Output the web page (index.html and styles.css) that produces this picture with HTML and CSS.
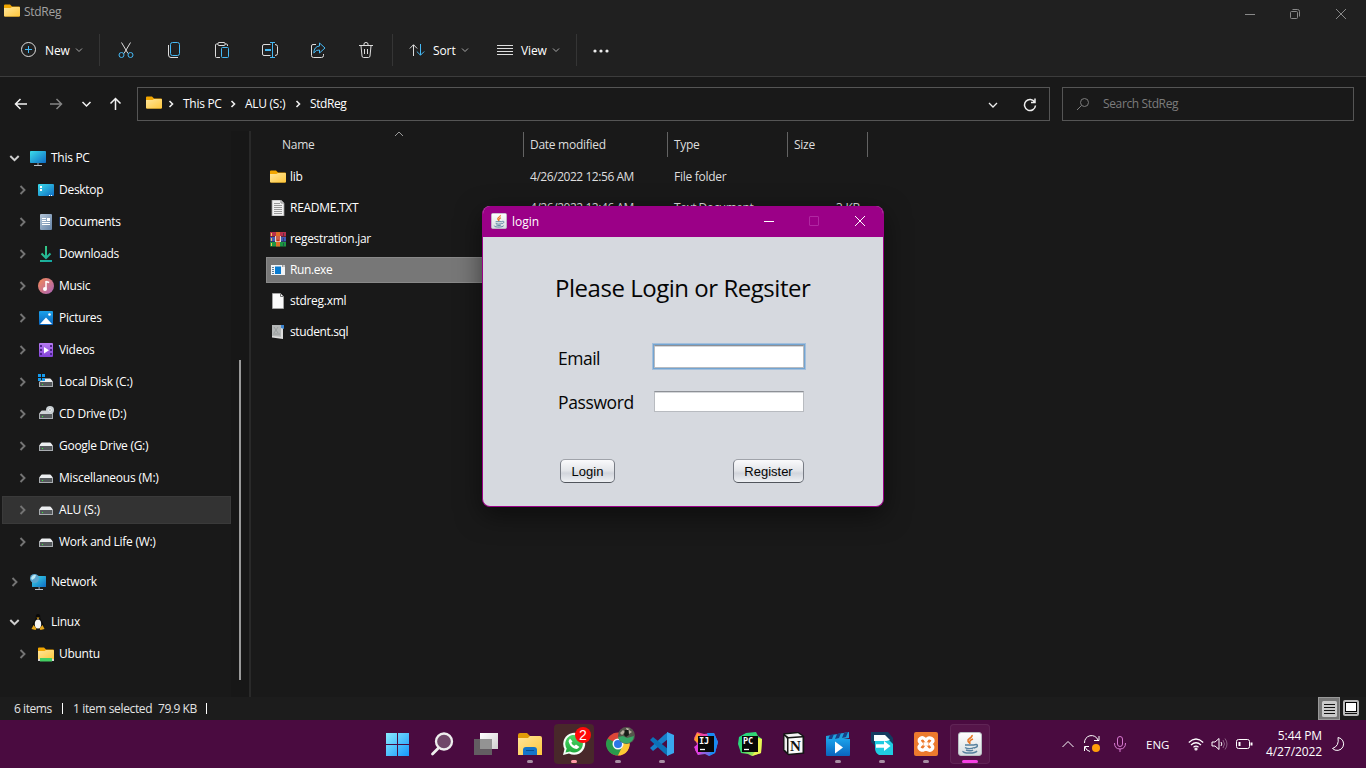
FILE: index.html
```html
<!DOCTYPE html>
<html lang="en">
<head>
<meta charset="utf-8">
<title>StdReg</title>
<link rel="stylesheet" href="styles.css">
</head>
<body>
<svg class="defs" aria-hidden="true">
  <defs>
    <linearGradient id="gFolder" x1="0" y1="0" x2="1" y2="1"><stop offset="0" stop-color="#ffe69b"/><stop offset="1" stop-color="#ffc73c"/></linearGradient>
    <linearGradient id="gBlue" x1="0" y1="0" x2="1" y2="1"><stop offset="0" stop-color="#3bdcea"/><stop offset="1" stop-color="#0f6cc4"/></linearGradient>
    <linearGradient id="gDoc" x1="0" y1="0" x2="1" y2="1"><stop offset="0" stop-color="#b4c6d8"/><stop offset="1" stop-color="#6482a6"/></linearGradient>
    <linearGradient id="gMusic" x1="0" y1="0" x2="1" y2="1"><stop offset="0" stop-color="#f58a55"/><stop offset="1" stop-color="#a862b8"/></linearGradient>
    <linearGradient id="gPic" x1="0" y1="0" x2="0" y2="1"><stop offset="0" stop-color="#1ba1ea"/><stop offset="1" stop-color="#0a64bd"/></linearGradient>
    <linearGradient id="gVid" x1="0" y1="0" x2="0" y2="1"><stop offset="0" stop-color="#b77bf2"/><stop offset="1" stop-color="#8242d8"/></linearGradient>
    <linearGradient id="gDown" gradientUnits="userSpaceOnUse" x1="2" y1="0" x2="14" y2="16"><stop offset="0" stop-color="#3ccf7c"/><stop offset="1" stop-color="#12a5a5"/></linearGradient>
    <linearGradient id="gWin" x1="0" y1="0" x2="1" y2="1"><stop offset="0" stop-color="#8aebff"/><stop offset="1" stop-color="#1597fb"/></linearGradient>
    <linearGradient id="gTask" x1="0" y1="0" x2="1" y2="1"><stop offset="0" stop-color="#ffffff"/><stop offset="1" stop-color="#cfcfcf"/></linearGradient>
    <linearGradient id="gWa" x1="0" y1="0" x2="0" y2="1"><stop offset="0" stop-color="#4ed868"/><stop offset="1" stop-color="#1faa3b"/></linearGradient>
    <linearGradient id="gIj" x1="0" y1="0" x2="1" y2="1"><stop offset="0" stop-color="#ff3c6e"/><stop offset=".45" stop-color="#d64ad0"/><stop offset="1" stop-color="#148cff"/></linearGradient>
    <linearGradient id="gPyc" x1="0" y1="0" x2="1" y2="1"><stop offset="0" stop-color="#1ed98b"/><stop offset=".5" stop-color="#37d66c"/><stop offset="1" stop-color="#f5ef48"/></linearGradient>
    <linearGradient id="gJava" x1="0" y1="0" x2="0" y2="1"><stop offset="0" stop-color="#ffffff"/><stop offset="1" stop-color="#d5dde0"/></linearGradient>
    <symbol id="folder" viewBox="0 0 16 16"><path d="M0 2.500Q0 1.500 1 1.500h5l2 2h7q1 0 1 1v8q0 1-1 1H1q-1 0-1-1z" fill="#f2a600"/><path d="M0 5h6.500l1.500-1h7q1 0 1 1v7.500q0 1-1 1H1q-1 0-1-1z" fill="url(#gFolder)"/></symbol>
    <symbol id="chev-r" viewBox="0 0 16 16"><path d="M6.500 4 10.500 8l-4 4" fill="none" stroke="currentColor" stroke-width="1.900"/></symbol>
    <symbol id="chev-d" viewBox="0 0 16 16"><path d="M4.300 6 8.500 10.200 12.700 6" fill="none" stroke="currentColor" stroke-width="2"/></symbol>
    <symbol id="pc" viewBox="0 0 16 16"><rect y="1" width="16" height="12" rx=".8" fill="url(#gBlue)"/><path d="M7.300 13h1.400v2H7.300z" fill="#77828c"/><path d="M4 15h8v1H4z" fill="#b9c1c9"/></symbol>
    <symbol id="desktop" viewBox="0 0 16 16"><rect y="2" width="16" height="12" rx="1" fill="url(#gBlue)"/><path d="M2 4h2v2H2zM2 7h2v2H2z" fill="#fff"/><path d="M11 13h1v1h-1zM13 13h1v1h-1z" fill="#fff"/></symbol>
    <symbol id="documents" viewBox="0 0 16 16"><rect x="2" width="12" height="16" rx="1" fill="url(#gDoc)"/><path d="M4 4.500h4M4 6.500h4M4 8.500h8M4 10.500h8" stroke="#fff"/><path d="M9 4h3v3H9z" fill="#fff"/></symbol>
    <symbol id="downloads" viewBox="0 0 16 16"><path d="M8 0v11M3.500 7.500 8 12l4.500-4.500M2 15h12" fill="none" stroke="url(#gDown)" stroke-width="2"/></symbol>
    <symbol id="music" viewBox="0 0 16 16"><circle cx="8" cy="8" r="8" fill="url(#gMusic)"/><path d="M8 3v7.500M8 3.500l3.200 1" stroke="#fff" stroke-width="1.500"/><circle cx="7" cy="11" r="2" fill="#fff"/></symbol>
    <symbol id="pictures" viewBox="0 0 16 16"><rect x="1" y="1" width="14" height="14" rx="1" fill="url(#gPic)"/><path d="M2 14 8 7.500l6 6.500z" fill="#fff"/><circle cx="11.500" cy="4.500" r="1.300" fill="#fff"/></symbol>
    <symbol id="videos" viewBox="0 0 16 16"><rect x="1" y="1" width="14" height="14" rx="1" fill="url(#gVid)"/><path d="M2 3h2v2H2zM2 7h2v2H2zM2 11h2v2H2zM12 3h2v2h-2zM12 7h2v2h-2zM12 11h2v2h-2z" fill="#4d248a"/><path d="M6 5v6.500l5-3.250z" fill="#fff"/></symbol>
    <symbol id="drive" viewBox="0 0 16 16"><path d="M4 4.500h8q1 0 3 3.500H1q2-3.500 3-3.500z" fill="#eceef0"/><path d="M1 8h14v4H1z" fill="#55595c"/><path d="M1 12h14v1H1zM1 8h1v4H1zM14 8h1v4h-1z" fill="#a8acb0"/><path d="M4 10h1v1H4z" fill="#37ee37"/></symbol>
    <symbol id="disk-c" viewBox="0 0 16 16"><path d="M7 4.500h5q1 0 3 3.500H1z" fill="#eceef0"/><path d="M1 8h14v4H1z" fill="#55595c"/><path d="M1 12h14v1H1zM1 8h1v4H1zM14 8h1v4h-1z" fill="#a8acb0"/><path d="M4 10h1v1H4z" fill="#37ee37"/><path d="M0 0h3v3H0zM4 0h3v3H4zM0 4h3v3H0zM4 4h3v3H4z" fill="#159bed"/></symbol>
    <symbol id="cd" viewBox="0 0 16 16"><path d="M4 4.500h8q1 0 3 3.500H1q2-3.500 3-3.500z" fill="#d0d3d6"/><path d="M1 8h14v4H1z" fill="#55595c"/><path d="M1 12h14v1H1zM1 8h1v4H1zM14 8h1v4h-1z" fill="#a8acb0"/><path d="M4 10h1v1H4z" fill="#37ee37"/><circle cx="12" cy="4" r="4" fill="#c9d0d4"/><circle cx="12" cy="4" r="1.300" fill="#69737a" stroke="#fff"/></symbol>
    <symbol id="network" viewBox="0 0 16 16"><rect x="2" y="2" width="14" height="11" rx=".5" fill="url(#gBlue)"/><path d="M8.500 13h1.300v2H8.500z" fill="#77828c"/><path d="M5 15h8v1H5z" fill="#b9c1c9"/><circle cx="4.500" cy="4.500" r="4.500" fill="#5aa5cf"/><path d="M1 4Q3 0 6 1L5 4 2 6z" fill="#bce9f5"/></symbol>
    <symbol id="tux" viewBox="0 0 16 16"><path d="M6 1q2-2 4 0l.5 4 3 5v4H2.500v-4l3-5z" fill="#090909"/><ellipse cx="8" cy="10" rx="3.200" ry="4.500" fill="#f4f4f4"/><path d="M6.500 3.500h3L8 5.500zM3.500 11l3 3.500-1 1.500-4-1zM12.500 11l-3 3.500 1 1.500 4-1z" fill="#e6a71c"/></symbol>
    <symbol id="ubuntu" viewBox="0 0 16 16"><use href="#folder"/><path d="M0 13h16v2H0z" fill="#d6d6d6"/><path d="M2 12h12v3.500H2z" fill="#43cf62"/></symbol>
    <symbol id="txt" viewBox="0 0 16 16"><path d="M2 0h9l3 3v13H2z" fill="#f2f2f2" stroke="#999" stroke-width=".8"/><path d="M4 3.500h6M4 5.500h8M4 7.500h8M4 9.500h8M4 11.500h8M4 13.500h8" stroke="#999"/><path d="M11 0v3h3" fill="none" stroke="#888"/></symbol>
    <symbol id="xml" viewBox="0 0 16 16"><path d="M2.500.5h8l3 3v12h-11z" fill="#fafafa" stroke="#a8a8a8" stroke-width=".8"/><path d="M10.500.5v3h3" fill="none" stroke="#777"/></symbol>
    <symbol id="jar" viewBox="0 0 16 16"><path d="M0 1h16v4.500H0z" fill="#b8304a"/><path d="M0 6h16v4.500H0z" fill="#4259b4"/><path d="M0 11h16v4.500H0z" fill="#1d9642"/><path d="M6 1h4v14.500H6z" fill="#e06e26"/><path d="M5 5h6v6H5z" fill="#e2d6d0"/><path d="M7 5v4.500h2V5" fill="none" stroke="#c22c12" stroke-width="1.400"/><path d="M1 2h1v3H1zM1 7h1v3H1zM1 12h1v3H1z" fill="#efc757"/><path d="M13 2h1v3h-1zM13 7h1v3h-1zM13 12h1v3h-1z" fill="#222a55" opacity=".6"/></symbol>
    <symbol id="exe" viewBox="0 0 16 16"><path d="M1 3h14v10H1z" fill="#f1f3f5"/><path d="M5 4.500h6v7.500H5z" fill="#087bd0"/><path d="M2 5.500h2M2 7.500h2M2 9.500h2M2 11.500h2" stroke="#5b7d98"/><path d="M12.500 3v2M14 3v2" stroke="#777" stroke-width=".7"/></symbol>
    <symbol id="sql" viewBox="0 0 16 16"><path d="M2 1h11v12H2z" fill="#b4b7b7"/><path d="m4 3 4 6M8 3 4 9M3 10h7" stroke="#9a9e9e"/><path d="m2 12 11 1v2L2 13.500zM11 3h2v10h-2z" fill="#ddd"/><path d="M11 1h3v4l-3-1z" fill="#3d85cf"/></symbol>
    <symbol id="java" viewBox="0 0 24 24"><rect x=".5" y=".5" width="23" height="23" rx="2.500" fill="url(#gJava)" stroke="#b8bec2"/><path d="M14 3c1 3-5 3.500-4 6 0 1 2 2 2 3M15 7c-3 1-4 2-3 5" fill="none" stroke="#e77725" stroke-width="1.600"/><path d="M7 13h9M7 15.500c2 1.500 7 1.500 9 0M8 18c2 1 6 1 7 0M16 13c4-2 5 2 0 3M5 19c-1 2.500 12 3 14 0" fill="none" stroke="#56809d" stroke-width="1.400"/></symbol>
  </defs>
</svg>

<header class="chrome">
  <div class="titlebar">
    <svg class="i16"><use href="#folder"/></svg>
    <span class="caption">StdReg</span>
    <div class="controls">
      <svg width="12" height="12" viewBox="0 0 12 12"><path d="M1 6.500h10"/></svg>
      <svg width="12" height="12" viewBox="0 0 12 12"><rect x="1.500" y="3.500" width="7" height="7" rx="1"/><path d="M3.500 1.500h5q2 0 2 2v5"/></svg>
      <svg width="12" height="12" viewBox="0 0 12 12"><path d="m1 1 10 10M11 1 1 11"/></svg>
    </div>
  </div>
  <div class="toolbar">
    <button class="tool new"><svg width="16" height="16" viewBox="0 0 16 16"><circle cx="8.500" cy="7.500" r="7"/><path class="accent" d="M8.500 4v7M5 7.500h7"/></svg><span>New</span><svg class="mini" viewBox="0 0 8 6"><path d="m1 1.500 3 3 3-3"/></svg></button>
    <i class="rule"></i>
    <div class="actions">
      <svg viewBox="0 0 18 18"><path d="m4.500 1.500 6.500 11M13.500 1.500 7 12.500"/><g class="accent"><circle cx="4.500" cy="14" r="2.500"/><circle cx="13.500" cy="14" r="2.500"/></g></svg>
      <svg viewBox="0 0 18 18"><path d="M3.500 4v10q0 2.500 2.500 2.500h7"/><rect class="accent" x="5.500" y="1.500" width="9" height="13" rx="2"/></svg>
      <svg viewBox="0 0 18 18"><path d="M5 3H3.500q-1 0-1 1v11.500q0 1 1 1H7M12 3h1.500q1 0 1 1v1"/><rect x="5" y="1.500" width="7" height="3" rx="1"/><rect class="accent" x="8.500" y="6.500" width="7" height="10" rx="1"/></svg>
      <svg viewBox="0 0 18 18"><path d="M9.500 3.500H3Q1.500 3.500 1.500 5v8q0 1.500 1.500 1.500h6.500M14 3.500q2.500 0 2.500 2v7q0 2-2.500 2"/><path class="accent" d="M9 1.500h5M11.500 1.500v15M9 16.500h5"/><path class="accent thick" d="M4 9h6"/></svg>
      <svg viewBox="0 0 18 18"><path d="M7 3.500H4Q2.500 3.500 2.500 5v9.500q0 2 2 2h8q2 0 2-2V13"/><path class="accent" d="M10.500 2 16 7l-5.500 5V9Q7 8.500 4.800 12 5 5.500 10.500 5z"/></svg>
      <svg viewBox="0 0 18 18"><path d="M2 4.500h14M7 4V3q0-1.500 2-1.500T11 3v1M4 5l1 10q.2 1.500 1.500 1.500h5q1.300 0 1.500-1.500l1-10M7.500 8v5M10.500 8v5"/></svg>
    </div>
    <i class="rule"></i>
    <button class="tool sort"><svg width="16" height="14" viewBox="0 0 16 14"><path d="M4.500 13V2M.8 5.500 4.500 1.700l3.700 3.800"/><path class="accent" d="M11.500 1v11M7.800 8.500l3.700 3.700 3.700-3.700"/></svg><span>Sort</span><svg class="mini" viewBox="0 0 8 6"><path d="m1 1.500 3 3 3-3"/></svg></button>
    <button class="tool view"><svg width="16" height="14" viewBox="0 0 16 14"><path d="M0 2.500h16M0 5.500h16M0 8.500h16M0 11.500h16"/></svg><span>View</span><svg class="mini" viewBox="0 0 8 6"><path d="m1 1.500 3 3 3-3"/></svg></button>
    <i class="rule"></i>
    <svg class="more" viewBox="0 0 16 4"><circle cx="2" cy="2" r="1.600"/><circle cx="8" cy="2" r="1.600"/><circle cx="14" cy="2" r="1.600"/></svg>
  </div>
</header>

<nav class="navrow">
  <div class="arrows">
    <svg viewBox="0 0 14 14"><path d="M13 7H1.500M6.500 2l-5 5 5 5"/></svg>
    <svg class="off" viewBox="0 0 14 14"><path d="M1 7h11.500M7.500 2l5 5-5 5"/></svg>
    <svg viewBox="0 0 14 14"><path d="M3.500 5l4 4 4-4"/></svg>
    <svg viewBox="0 0 14 14"><path d="M7.500 13V1.500M2.500 6.500l5-5 5 5"/></svg>
  </div>
  <div class="address">
    <svg class="i16"><use href="#folder"/></svg>
    <svg class="sep" viewBox="0 0 6 8"><path d="m1.500 1 3 3-3 3"/></svg><span class="c1">This PC</span>
    <svg class="sep" viewBox="0 0 6 8"><path d="m1.500 1 3 3-3 3"/></svg><span class="c2">ALU (S:)</span>
    <svg class="sep" viewBox="0 0 6 8"><path d="m1.500 1 3 3-3 3"/></svg><span class="c3">StdReg</span>
    <svg class="drop" viewBox="0 0 10 8"><path d="m1 2 4 4 4-4"/></svg>
    <svg class="refresh" viewBox="0 0 14 14"><path d="M11.800 4.300A5.500 5.500 0 1 0 12.500 7.500M12 .5v4H8"/></svg>
  </div>
  <div class="search"><svg viewBox="0 0 14 14"><circle cx="8.500" cy="5.500" r="4"/><path d="M5.500 8.500 1 13"/></svg><span>Search StdReg</span></div>
</nav>

<main class="main">
  <aside class="tree">
    <div class="node top open"><svg class="chev"><use href="#chev-d"/></svg><svg class="i16"><use href="#pc"/></svg><span>This PC</span></div>
    <div class="node"><svg class="chev"><use href="#chev-r"/></svg><svg class="i16"><use href="#desktop"/></svg><span>Desktop</span></div>
    <div class="node"><svg class="chev"><use href="#chev-r"/></svg><svg class="i16"><use href="#documents"/></svg><span>Documents</span></div>
    <div class="node"><svg class="chev"><use href="#chev-r"/></svg><svg class="i16"><use href="#downloads"/></svg><span>Downloads</span></div>
    <div class="node"><svg class="chev"><use href="#chev-r"/></svg><svg class="i16"><use href="#music"/></svg><span>Music</span></div>
    <div class="node"><svg class="chev"><use href="#chev-r"/></svg><svg class="i16"><use href="#pictures"/></svg><span>Pictures</span></div>
    <div class="node"><svg class="chev"><use href="#chev-r"/></svg><svg class="i16"><use href="#videos"/></svg><span>Videos</span></div>
    <div class="node vol-node"><svg class="chev"><use href="#chev-r"/></svg><svg class="i16"><use href="#disk-c"/></svg><span>Local Disk (C:)</span></div>
    <div class="node"><svg class="chev"><use href="#chev-r"/></svg><svg class="i16"><use href="#cd"/></svg><span>CD Drive (D:)</span></div>
    <div class="node"><svg class="chev"><use href="#chev-r"/></svg><svg class="i16"><use href="#drive"/></svg><span>Google Drive (G:)</span></div>
    <div class="node vol-node"><svg class="chev"><use href="#chev-r"/></svg><svg class="i16"><use href="#drive"/></svg><span>Miscellaneous (M:)</span></div>
    <div class="node vol-node selected"><svg class="chev"><use href="#chev-r"/></svg><svg class="i16"><use href="#drive"/></svg><span>ALU (S:)</span></div>
    <div class="node"><svg class="chev"><use href="#chev-r"/></svg><svg class="i16"><use href="#drive"/></svg><span>Work and Life (W:)</span></div>
    <div class="node top gap"><svg class="chev"><use href="#chev-r"/></svg><svg class="i16"><use href="#network"/></svg><span>Network</span></div>
    <div class="node top open gap"><svg class="chev"><use href="#chev-d"/></svg><svg class="i16"><use href="#tux"/></svg><span>Linux</span></div>
    <div class="node"><svg class="chev"><use href="#chev-r"/></svg><svg class="i16"><use href="#ubuntu"/></svg><span>Ubuntu</span></div>
  </aside>
  <div class="scroll"><i></i></div>
  <section class="files">
    <div class="cols head"><span class="name">Name<svg class="asc" viewBox="0 0 10 6"><path d="m1 5 4-4 4 4"/></svg></span><span>Date modified</span><span>Type</span><span>Size</span></div>
    <div class="cols file"><span class="name"><svg class="i16"><use href="#folder"/></svg>lib</span><span class="when">4/26/2022 12:56 AM</span><span>File folder</span><span></span></div>
    <div class="cols file"><span class="name"><svg class="i16"><use href="#txt"/></svg>README.TXT</span><span class="when">4/26/2022 12:46 AM</span><span class="kind">Text Document</span><span class="num">3 KB</span></div>
    <div class="cols file"><span class="name jar"><svg class="i16"><use href="#jar"/></svg>regestration.jar</span></div>
    <div class="cols file picked"><span class="name"><svg class="i16"><use href="#exe"/></svg>Run.exe</span></div>
    <div class="cols file"><span class="name"><svg class="i16"><use href="#xml"/></svg>stdreg.xml</span></div>
    <div class="cols file"><span class="name long"><svg class="i16"><use href="#sql"/></svg>student.sql</span></div>
  </section>
</main>

<footer class="status">
  <span class="count">6 items</span><i></i><span class="sel">1 item selected</span><span class="size">79.9 KB</span><i></i>
  <div class="modes">
    <svg class="on" width="22" height="23" viewBox="0 0 22 23"><rect x=".5" y=".5" width="21" height="22" fill="#777" stroke="#999"/><rect x="4" y="4" width="15" height="16" rx="1.500" fill="#cacaca"/><path d="M6 7.500h11M6 10.500h11M6 13.500h11M6 16.500h11" stroke="#111"/></svg>
    <svg width="22" height="23" viewBox="0 0 22 23"><rect x="3" y="3" width="16" height="16" rx="2" fill="#bbb"/><rect x="5.500" y="5.500" width="11" height="9" fill="#fff" stroke="#000"/><path d="M5 16.500h12" stroke="#111"/></svg>
  </div>
</footer>

<footer class="taskbar">
  <div class="apps">
    <div class="app"><svg viewBox="0 0 24 24"><path d="M0 1h11v11H0zM12 1h11v11H12zM0 13h11v11H0zM12 13h11v11H12z" fill="url(#gWin)"/></svg></div>
    <div class="app"><svg viewBox="0 0 24 24"><circle cx="14" cy="9.500" r="8" fill="#704869" stroke="#eee" stroke-width="2.300"/><path d="m8.500 16-6 6" stroke="#eee" stroke-width="2.800" stroke-linecap="round"/></svg></div>
    <div class="app"><svg viewBox="0 0 24 24"><path d="M6 1h18v16H6z" fill="url(#gTask)"/><path d="M0 7h18v16H0z" fill="#666" fill-opacity=".9"/><path d="M6 7h12v10H6z" fill="#939393"/></svg></div>
    <div class="app run"><svg viewBox="0 0 24 24"><path d="M0 3q0-2 2-2h7l3 3h10v7H0z" fill="#e09b08"/><path d="M0 6h10l2-2h10q2 0 2 2v17H0z" fill="url(#gFolder)"/><path d="M5 23v-5q0-3 3-3h8q3 0 3 3v5z" fill="#1475ca"/><path d="M8 18.500h8" stroke="#064e93"/></svg></div>
    <div class="app run whats"><svg viewBox="0 0 24 24"><path d="M1 23l1.500-6A11 11 0 1 1 7 21.500z" fill="#f5fff6"/><path d="m3.500 20.500 1.200-4A8.800 8.800 0 1 1 8 19.500z" fill="url(#gWa)"/><path d="M8 6.500 6.500 9c1 4.500 4 7.500 8.500 8l2.500-2-3.500-2.500-1.500 1.200c-1.500-.5-2.500-1.500-3.200-3L10.500 9.500z" fill="#fff"/></svg><b class="badge">2</b></div>
    <div class="app run"><svg viewBox="0 0 24 24"><circle cx="12" cy="12" r="11.500" fill="#de4638"/><path d="M1.500 6.500A11.500 11.500 0 0 0 12 23.500l5-9-5-2.500z" fill="#299b4c"/><path d="M23 8A11.500 11.500 0 0 1 12 23.500L17 13V8z" fill="#fcc934"/><circle cx="12" cy="12" r="5.500" fill="#f4f7ff"/><circle cx="12" cy="12" r="4" fill="#2b76e7"/></svg><svg class="avatar" viewBox="0 0 17 17"><circle cx="8.500" cy="8.500" r="8.500" fill="#55564c"/><path d="M0 10 5 9l4 2 7-2q-1 7-7.500 7.500Q2 16 0 10z" fill="#37a867"/><path d="m2 6 3-3 2 2-3 3zM11 3l3 2-3 2z" fill="#b9afa0"/><path d="M7 3h3l1 5-3 2-2-2z" fill="#191a17"/><path d="m8 1 4 1-3 1z" fill="#ddd3c4"/></svg></div>
    <div class="app run"><svg viewBox="0 0 24 24"><path d="m18 0-4 3L0 16l3 3L18 7z" fill="#167fc9"/><path d="m18 24-4-3L0 8l3-3 15 12z" fill="#0c71b7"/><path d="m17 0 7 3v18l-7 3z" fill="#39a8ef"/></svg></div>
    <div class="app"><svg viewBox="0 0 24 24"><path d="M0 6 3 0l7 2 10-1 4 9-3 11-6 3-4-2-7 1-3-5 2-6z" fill="url(#gIj)"/><path d="m0 15 4-3 3 9-3 2z" fill="#e13ddf"/><path d="M0 8 3 1l3 1-2 9z" fill="#ff9d2f"/><path d="m13 1 7 0 4 9-3 11-6 3 3-7z" fill="#188bf2"/><path d="M4 4h16v16H4z" fill="#080808"/><path d="M6 17.500h5" stroke="#fff" stroke-width="1.300"/></svg><span class="mark">IJ</span></div>
    <div class="app"><svg viewBox="0 0 24 24"><path d="M1 5 8 1l10-1 2 4 4 3-1 14-9 3-4-2-7-1-3-9z" fill="url(#gPyc)"/><path d="M20 6l4 1-1 14-9 3 4-6z" fill="#ecf452"/><path d="M4 4h16v16H4z" fill="#080808"/><path d="M6 17.500h5" stroke="#fff" stroke-width="1.300"/></svg><span class="mark">PC</span></div>
    <div class="app"><svg viewBox="0 0 24 24"><path d="m2 2 14-1.500 5.500 4V21l-15 1.500-4.500-4z" fill="#151515" stroke="#151515" stroke-width="1.500"/><path d="m3 2.500 13-1.200L20 4 6.500 5z" fill="#f4f4f4"/><path d="M6.500 6.500 20.500 5.500v15l-14 1.200z" fill="#fafafa"/><path d="M2.500 4 5 6.500V20l-2.500-2.500z" fill="#eee"/></svg><span class="mark notion">N</span></div>
    <div class="app run"><svg viewBox="0 0 24 24"><path d="m0 4 23-4v6L0 10z" fill="#20a1de"/><path d="m4 3 4-1-2 5-4 1zM11 2l4-1-2 5-4 1zM18 1l4-1-2 5-4 1z" fill="#163f87"/><path d="M0 7h24v16q0 1-1 1H1q-1 0-1-1z" fill="url(#gPic)"/><path d="m9 9.500 8 6-8 6z" fill="#fff"/></svg></div>
    <div class="app run"><svg viewBox="0 0 24 24"><path d="M1 0h17l5 6v17h-9L1 10z" fill="#123c60"/><path d="M5 4h10l8 8v11H9q-4-2-4-7z" fill="#20cbe1"/><path d="M4 3h11l5 5-7 2-9-1z" fill="#f9ffff"/><path d="M5 9h12l2 2v2H5z" fill="#20cbe1"/><path d="M6 14h9" stroke="#fff" stroke-width="3.500"/><path d="m14 9 6.500 5-6.500 5z" fill="#fff"/></svg></div>
    <div class="app run"><svg viewBox="0 0 24 24"><rect width="24" height="24" rx="2" fill="#ed7a2d"/><path d="M12 8.500Q9.500 4.500 6.500 6.500T7.500 12Q3 15.500 6.500 17.500T12 15.500Q14.500 19.500 17.500 17.500T16.500 12Q21 8.500 17.500 6.500T12 8.500zM9.500 12h5" fill="none" stroke="#fff" stroke-width="3.400" stroke-linejoin="round"/></svg></div>
    <div class="app run active"><svg><use href="#java"/></svg></div>
  </div>
  <div class="tray">
    <svg class="up" width="14" height="10" viewBox="0 0 14 10"><path d="m1.500 8 5.500-5.500L12.500 8"/></svg>
    <svg class="sync" width="18" height="18" viewBox="0 0 18 18"><path d="M1.500 8A7 7 0 0 1 15 5M16 1v4.500h-5M7 16.500A7 7 0 0 1 2 12M1.500 16v-4.500H6"/><circle cx="13" cy="13" r="4" fill="#ff9d0a" stroke="none"/></svg>
    <svg class="mic" width="14" height="18" viewBox="0 0 14 18"><rect x="4.500" y="1.500" width="5" height="10" rx="2.500"/><path d="M1.500 8q0 6 5.500 6t5.500-6M7 14v3"/></svg>
    <span class="lang">ENG</span>
    <svg class="wifi" width="16" height="14" viewBox="0 0 16 14"><path d="M.8 5.500q7.200-7 14.400 0M3 8q5-4.500 10 0M5.500 10.300q2.500-2.200 5 0"/><circle cx="8" cy="12" r="1"/></svg>
    <svg class="vol" width="17" height="14" viewBox="0 0 17 14"><path d="M1 5h3l4-3.500v11L4 9H1zM10 5q1.700 2 0 4"/><path opacity=".35" d="M12 3q3 4 0 8M14 1.500q4 5.500 0 11"/></svg>
    <svg class="bat" width="17" height="12" viewBox="0 0 17 12"><rect x=".5" y="1.500" width="13" height="9" rx="2"/><path d="M3.500 4v4M15.500 4.500v3" stroke-width="2"/></svg>
    <div class="clock"><span class="time">5:44 PM</span><span class="date">4/27/2022</span></div>
    <svg class="moon" width="14" height="16" viewBox="0 0 14 16"><path d="M7 1.500a6.500 6.500 0 1 1-5.500 11Q8.500 10 7 1.500z"/></svg>
  </div>
</footer>

<section class="dialog">
  <header class="dlg-title"><svg class="i16"><use href="#java"/></svg><span>login</span>
    <div class="dlg-controls">
      <svg width="12" height="12" viewBox="0 0 12 12"><path d="M1 6.500h10"/></svg>
      <svg class="disabled" width="12" height="12" viewBox="0 0 12 12"><rect x="1.500" y="1.500" width="9" height="9" rx=".5"/></svg>
      <svg width="12" height="12" viewBox="0 0 12 12"><path d="m1 1 10 10M11 1 1 11"/></svg>
    </div>
  </header>
  <form class="form">
    <h1><span>Please Login or Regsiter</span></h1>
    <div class="row"><label class="email" for="email">Email</label><input id="email" class="focused" type="text"></div>
    <div class="row"><label class="password" for="pw">Password</label><input id="pw" type="password"></div>
    <div class="buttons"><button type="button" class="btn login">Login</button><button type="button" class="btn register">Register</button></div>
  </form>
</section>
</body>
</html>
```
FILE: styles.css
```css
* { box-sizing: border-box; }
body { margin: 0; width: 1366px; height: 768px; overflow: hidden; display: flex; flex-direction: column; background: #191919; color: #fff; font: 12px/16px "Open Sans", "Noto Sans", sans-serif; letter-spacing: -.28px; white-space: nowrap; position: relative; }
svg { display: block; flex: none; fill: none; }
button { font: inherit; color: inherit; letter-spacing: inherit; border: 0; background: none; padding: 0; }
.defs { position: absolute; width: 0; height: 0; }
.i16 { width: 16px; height: 16px; }

.chrome { height: 77px; flex: none; background: #202020; border-bottom: 1px solid #3c3c3c; }
.titlebar { height: 27px; display: flex; align-items: flex-start; padding: 3px 19px 0 4px; }
.titlebar .caption { margin: 1px 0 0 4px; color: #a2a2a2; }
.controls { margin: 5px 0 0 auto; display: flex; gap: 34px; stroke: #898989; }
.controls svg:first-child { margin-right: -1px; }
.toolbar { height: 46px; display: flex; align-items: center; stroke: #ddd; }
.tool { display: flex; align-items: center; font-weight: 500; letter-spacing: -.1px; }
.tool span { margin-left: 9px; padding-top: 1px; }
.new { width: 79px; margin-left: 20px; }
.mini { width: 8px; height: 6px; margin-left: 5px; stroke: #aaa; }
.accent { stroke: #45b9f5; }
.thick { stroke-width: 2; }
.rule { width: 1px; height: 32px; background: #353535; }
.actions { display: flex; gap: 30px; width: 292px; padding-left: 17px; }
.actions svg { width: 18px; height: 18px; }
.sort { width: 88px; margin-left: 16px; }
.sort span { margin-left: 8px; }
.view { width: 79px; }
.view span { margin-left: 8px; }
.more { width: 16px; height: 4px; margin: 1px 0 0 16px; fill: #eee; stroke: none; }

.navrow { height: 54px; flex: none; display: flex; align-items: flex-start; padding: 10px 12px 0 14px; }
.arrows { display: flex; gap: 20px; padding-top: 10px; width: 123px; stroke: #f2f2f2; stroke-width: 1.500; }
.arrows svg { width: 14px; height: 14px; }
.arrows svg:first-child { margin-right: 1px; }
.arrows svg:nth-child(3) { margin: 0 -5px 0 -4px; }
.arrows .off { stroke: #858585; }
.address { width: 913px; height: 34px; border: 1px solid #555; display: flex; align-items: center; padding: 0 12px 0 8px; stroke: #eee; }
.address > .i16 { margin-top: -2px; stroke: none; }
.sep { width: 6px; height: 8px; margin-left: 6px; stroke-width: 1.600; }
.address span { margin-left: 9px; }
.c1 { width: 41px; }
.c2 { width: 44px; }
.c3 { letter-spacing: -.4px; }
.drop { width: 10px; height: 8px; margin: 2px 0 0 auto; stroke-width: 1.300; }
.refresh { width: 14px; height: 14px; margin: 2px 0 0 25px; stroke-width: 1.500; }
.search { width: 292px; height: 34px; margin-left: 12px; border: 1px solid #555; display: flex; align-items: center; padding-left: 13px; gap: 13px; color: #7c7c7c; stroke: #7c7c7c; letter-spacing: -.37px; }
.search svg { width: 14px; height: 14px; }

.main { height: 566px; flex: none; display: flex; }
.tree { width: 231px; padding: 11px 0 0 2px; }
.node { display: flex; align-items: center; height: 32px; padding-left: 12px; }
.node .chev { width: 16px; height: 16px; color: #747474; }
.node .i16 { margin: 0 5px 0 8px; }
.node.top { padding-left: 4px; }
.node.open .chev { color: #d0d0d0; }
.node.gap { margin-top: 8px; }
.vol-node { letter-spacing: -.2px; }
.node.selected { height: 28px; margin: 2px 0; background: #333; border: 1px solid #3a3a3a; padding-left: 11px; }
.scroll { width: 20px; background: #171717; border-right: 2px solid #292929; padding: 229px 0 0 8px; }
.scroll i { display: block; width: 2px; height: 320px; background: #9a9a9a; }
.files { padding-left: 15px; }
.cols { display: grid; grid-template-columns: 257px 144px 120px 80px; align-items: center; }
.cols > span { padding-left: 7px; color: #dedede; }
.cols > .name { padding-left: 4px; color: #fff; display: flex; align-items: center; gap: 4px; }
.cols > .jar { letter-spacing: -.33px; }
.cols > .long { letter-spacing: -.38px; }
.cols > .when { letter-spacing: -.45px; }
.cols > .kind { letter-spacing: -.48px; }
.head { height: 25px; margin: 1px 0 4px; }
.head > span { border-right: 1px solid #636363; height: 25px; line-height: 25px; }
.head > .name { padding-left: 16px; color: #dedede; border-right: 1px solid #636363; width: 258px; }
.head > span:nth-child(n+2) { margin-left: 1px; padding-left: 6px; width: 100%; }
.asc { width: 10px; height: 6px; margin: -21px 0 0 76px; stroke: #999; }
.file { height: 31px; }
.file .num { text-align: right; padding-right: 7px; }
.picked { height: 26px; margin: 3px 0 2px; background: #777; border: 1px solid #898989; }
.picked > .name { padding-left: 3px; }
.files .picked .name { letter-spacing: -.4px; }

.status { height: 23px; flex: none; background: #1c1c1c; display: flex; align-items: center; padding-left: 14px; color: #e4e4e4; letter-spacing: -.45px; }
.status i { width: 1px; height: 11px; background: #fff; }
.count { width: 48px; }
.sel { margin-left: 10px; width: 85px; letter-spacing: -.36px; }
.size { width: 48px; }
.modes { display: flex; margin-left: auto; padding-right: 4px; }

.taskbar { height: 48px; flex: none; background: #4a0b40; display: flex; padding-left: 378px; }
.apps { display: flex; gap: 4px; padding-top: 4px; }
.app { width: 40px; height: 40px; position: relative; display: flex; flex-direction: column; align-items: center; padding-top: 8px; border-radius: 4px; }
.app > svg { width: 24px; height: 24px; }
.app.run::after { content: ""; width: 6px; height: 3px; border-radius: 2px; background: #a78da3; margin-top: 4px; }
.app.whats { background: #48282a; }
.app.whats::after { background: #ff9ba7; }
.app.active { background: #551549; box-shadow: inset 0 0 0 1px #5f2455; }
.app.active::after { width: 16px; background: #f63fe4; }
.badge { position: absolute; left: 21px; top: 3px; width: 16px; height: 16px; border-radius: 50%; background: #ff0a0a; font: 14px/16px "Liberation Sans", sans-serif; text-align: center; letter-spacing: 0; }
.app > .avatar { position: absolute; width: 17px; height: 17px; left: 20px; top: 3px; }
.mark { position: absolute; left: 13px; top: 12px; font: bold 8.500px/10px "DejaVu Sans Mono", monospace; letter-spacing: 0; }
.mark.notion { left: 16px; top: 14px; color: #111; font: bold 15px/16px "Liberation Serif", serif; }
.tray { margin-left: 71px; display: flex; align-items: center; stroke: #fff; letter-spacing: 0; }
.sync { margin-left: 8px; }
.mic { margin-left: 12px; stroke: #d878d0; }
.lang { margin: 1px 0 0 19px; width: 24px; font-size: 11.500px; }
.wifi { margin-left: 18px; stroke-width: 1.200; }
.vol { margin-left: 7px; }
.bat { margin-left: 8px; }
.clock { width: 69px; display: flex; flex-direction: column; align-items: flex-end; letter-spacing: -.1px; }
.moon { margin-left: 9px; }

.dialog { position: absolute; left: 482px; top: 206px; width: 402px; height: 301px; border: 1px solid #9b0087; border-top: 0; border-radius: 8px; overflow: hidden; background: #d6d9df; box-shadow: 0 8px 26px rgba(0,0,0,.5); color: #050505; }
.dlg-title { height: 31px; background: #9b0087; color: #fff; display: flex; align-items: center; padding: 0 17px 0 8px; }
.dlg-title > .i16 { margin-top: -1px; }
.dlg-title > span { margin-left: 5px; padding-top: 1px; letter-spacing: 0; }
.dlg-controls { display: flex; gap: 34px; margin: -1px 0 0 auto; stroke: #fff; }
.dlg-controls svg:first-child { margin-right: -1px; }
.disabled { stroke: #b028a2; }
.form { padding: 30px 79px 0 75px; }
h1 { margin: 0 0 0 -3px; height: 42px; font-size: 24px; line-height: 42px; font-weight: 400; letter-spacing: -.47px; }
.row { display: flex; align-items: center; height: 44px; justify-content: space-between; }
h1 + .row { margin-top: 26px; }
.row label { font-size: 17.500px; letter-spacing: -.38px; padding-top: 2px; }
.row .email { letter-spacing: -.5px; }
.row input { width: 150px; height: 21px; border: 1px solid #b8bbc0; border-top-color: #8d9096; background: #fff; box-shadow: inset 0 1px #d5d7da; outline: 0; padding: 0; }
.row input.focused { box-shadow: inset 0 1px #d5d7da, 0 0 0 1px #73a4d1, 0 0 0 2px #a3bfdc; height: 23px; margin-top: -1px; }
.buttons { display: flex; justify-content: space-between; padding: 36px 0 0 2px; }
.btn { height: 24px; border: 1px solid #777b84; border-top-color: #a0a3aa; border-bottom-color: #51555c; border-radius: 5px; background: linear-gradient(#fafafc, #e3e5e9 48%, #d2d5dc 60%, #eff1f4); font: 13px/20px "Liberation Sans", sans-serif; letter-spacing: 0; padding-top: 2px; }
.login { width: 55px; }
.register { width: 71px; }
```
